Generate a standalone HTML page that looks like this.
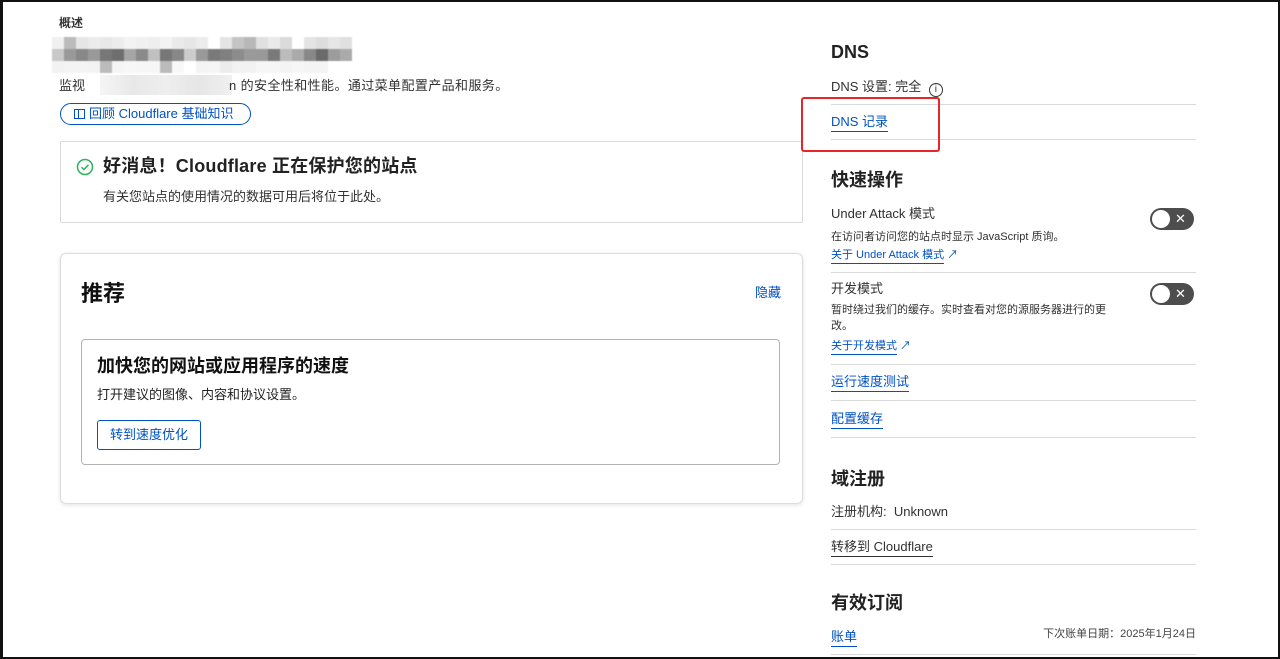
<!DOCTYPE html>
<html><head><meta charset="utf-8"><style>
*{margin:0;padding:0;box-sizing:border-box}
body{width:1280px;height:659px;overflow:hidden;background:#fff;font-family:"Liberation Sans","Noto Sans CJK SC",sans-serif;color:#313131;position:relative}
.a{position:absolute;white-space:nowrap;line-height:1}
.frame{position:absolute;left:0;top:0;width:1280px;height:659px;border-top:2px solid #111;border-left:3px solid #111;border-right:2px solid #111;border-bottom:2px solid #111;pointer-events:none;z-index:10}
.blue{color:#0051c3}
.ul{border-bottom:1px solid #0051c3;padding-bottom:2px}
.hr{position:absolute;left:831px;width:365px;height:1px;background:#d9d9d9}
.h{font-size:18px;font-weight:bold;color:#222}
.t13{font-size:13px}
.t11{font-size:11px}
.tog{position:absolute;left:1150px;width:44px;height:22px;border-radius:11px;background:#4d4d4d}
.tog:before{content:"";position:absolute;left:2px;top:2px;width:18px;height:18px;border-radius:50%;background:#fff}
.tog:after{content:"✕";position:absolute;left:25px;top:3px;color:#fff;font-size:13px;line-height:16px}
.mos{position:absolute;left:52px;top:37px;display:grid;grid-template-columns:repeat(25,12px);grid-auto-rows:12px;filter:blur(0.6px)}
</style></head><body>
<div class="a" style="left:59px;top:17px;font-size:12px;font-weight:bold;color:#333">概述</div>
<div class="mos">
<i style="background:#f0f0f0"></i><i style="background:#bbb"></i><i style="background:#e6e6e6"></i><i style="background:#ececec"></i><i style="background:#e8e8e8"></i><i style="background:#ececec"></i><i style="background:#f3f3f3"></i><i style="background:#f0f0f0"></i><i style="background:#eee"></i><i style="background:#f3f3f3"></i><i style="background:#eaeaea"></i><i style="background:#e6e6e6"></i><i style="background:#ececec"></i><i style="background:#fff"></i><i style="background:#e4e4e4"></i><i style="background:#c4c4c4"></i><i style="background:#b8b8b8"></i><i style="background:#e0e0e0"></i><i style="background:#eaeaea"></i><i style="background:#dadada"></i><i style="background:#fff"></i><i style="background:#e4e4e4"></i><i style="background:#ddd"></i><i style="background:#e6e6e6"></i><i style="background:#e0e0e0"></i>
<i style="background:#c8c8c8"></i><i style="background:#999"></i><i style="background:#888"></i><i style="background:#999"></i><i style="background:#777"></i><i style="background:#6e6e6e"></i><i style="background:#a5a5a5"></i><i style="background:#8a8a8a"></i><i style="background:#c0c0c0"></i><i style="background:#777"></i><i style="background:#888"></i><i style="background:#ccc"></i><i style="background:#999"></i><i style="background:#7a7a7a"></i><i style="background:#808080"></i><i style="background:#8c8c8c"></i><i style="background:#9a9a9a"></i><i style="background:#999"></i><i style="background:#7a7a7a"></i><i style="background:#bbb"></i><i style="background:#aaa"></i><i style="background:#888"></i><i style="background:#6a6a6a"></i><i style="background:#9c9c9c"></i><i style="background:#aaa"></i>
<i style="background:#f2f2f2"></i><i style="background:#f4f4f4"></i><i style="background:#f4f4f4"></i><i style="background:#f3f3f3"></i><i style="background:#bbb"></i><i style="background:#f5f5f5"></i><i style="background:#f7f7f7"></i><i style="background:#f6f6f6"></i><i style="background:#f6f6f6"></i><i style="background:#bbb"></i><i style="background:#f8f8f8"></i><i style="background:#fff"></i><i style="background:#f4f4f4"></i><i style="background:#f5f5f5"></i><i style="background:#ececec"></i><i style="background:#f2f2f2"></i><i style="background:#f2f2f2"></i><i style="background:#f6f6f6"></i><i style="background:#f6f6f6"></i><i style="background:#f4f4f4"></i><i style="background:#f6f6f6"></i><i style="background:#f4f4f4"></i><i style="background:#f4f4f4"></i><i style="background:#fff"></i><i style="background:#fff"></i>
</div>
<div class="a t13" style="left:59px;top:79px">监视</div>
<div class="a" style="left:100px;top:75px;width:132px;height:20px;background:linear-gradient(90deg,#f5f5f5,#e8e8e8,#eee,#e6e6e6,#f0f0f0)"></div>
<div class="a t13" style="left:229px;top:79px;letter-spacing:0.4px">n 的安全性和性能。通过菜单配置产品和服务。</div>
<div class="a t13 blue" style="left:60px;top:103px;width:191px;height:22px;border:1px solid #0051c3;border-radius:11px;padding:3px 0 0 13px;line-height:14px">
<span style="display:inline-block;width:11px;height:10px;border:1px solid #0051c3;margin-right:4px;vertical-align:-1px;position:relative"><span style="position:absolute;left:3px;top:0;width:1px;height:8px;background:#0051c3"></span></span>回顾 Cloudflare 基础知识</div>
<div class="a" style="left:60px;top:141px;width:743px;height:82px;border:1px solid #d9d9d9;border-radius:2px"></div>
<svg class="a" style="left:76px;top:158px" width="18" height="18" viewBox="0 0 18 18"><circle cx="9" cy="9" r="7.5" fill="none" stroke="#2db35d" stroke-width="1.5"/><path d="M5.5 9.2l2.4 2.4 4.6-4.8" fill="none" stroke="#2db35d" stroke-width="1.5"/></svg>
<div class="a" style="left:103px;top:157px;font-size:18px;font-weight:bold;color:#222;letter-spacing:0.2px">好消息！Cloudflare 正在保护您的站点</div>
<div class="a t13" style="left:103px;top:190px">有关您站点的使用情况的数据可用后将位于此处。</div>
<div class="a" style="left:60px;top:253px;width:743px;height:251px;border:1px solid #ddd;border-radius:6px;box-shadow:0 1px 4px rgba(0,0,0,.12)"></div>
<div class="a" style="left:81px;top:283px;font-size:22px;font-weight:bold;color:#111">推荐</div>
<div class="a t13 blue" style="left:755px;top:286px">隐藏</div>
<div class="a" style="left:81px;top:339px;width:699px;height:126px;border:1px solid #b3b3b3;border-radius:4px"></div>
<div class="a" style="left:97px;top:357px;font-size:18px;font-weight:bold;color:#111">加快您的网站或应用程序的速度</div>
<div class="a t13" style="left:97px;top:388px;color:#222">打开建议的图像、内容和协议设置。</div>
<div class="a t13 blue" style="left:97px;top:420px;width:104px;height:30px;border:1px solid #0051c3;border-radius:3px;text-align:center;line-height:28px">转到速度优化</div>

<div class="a h" style="left:831px;top:43px">DNS</div>
<div class="a t13" style="left:831px;top:80px">DNS 设置: 完全 <span style="display:inline-block;width:14px;height:14px;border:1px solid #333;border-radius:50%;font-size:10px;text-align:center;line-height:12px;vertical-align:-1px;margin-left:4px">i</span></div>
<div class="hr" style="top:104px"></div>
<div class="a t13 blue" style="left:831px;top:115px"><span class="ul">DNS 记录</span></div>
<div class="hr" style="top:139px"></div>
<div class="a" style="left:801px;top:97px;width:139px;height:55px;border:2px solid #e8262a;border-radius:3px"></div>
<div class="a h" style="left:831px;top:171px">快速操作</div>
<div class="a t13" style="left:831px;top:207px">Under Attack 模式</div>
<div class="tog" style="top:208px"></div>
<div class="a t11" style="left:831px;top:232px">在访问者访问您的站点时显示 JavaScript 质询。</div>
<div class="a t11 blue" style="left:831px;top:250px"><span class="ul">关于 Under Attack 模式</span> ↗</div>
<div class="hr" style="top:272px"></div>
<div class="a t13" style="left:831px;top:282px">开发模式</div>
<div class="tog" style="top:283px"></div>
<div class="a t11" style="left:831px;top:305px">暂时绕过我们的缓存。实时查看对您的源服务器进行的更</div>
<div class="a t11" style="left:831px;top:321px">改。</div>
<div class="a t11 blue" style="left:831px;top:341px"><span class="ul">关于开发模式</span> ↗</div>
<div class="hr" style="top:364px"></div>
<div class="a t13 blue" style="left:831px;top:375px"><span class="ul">运行速度测试</span></div>
<div class="hr" style="top:400px"></div>
<div class="a t13 blue" style="left:831px;top:412px"><span class="ul">配置缓存</span></div>
<div class="hr" style="top:437px"></div>
<div class="a h" style="left:831px;top:470px">域注册</div>
<div class="a t13" style="left:831px;top:505px">注册机构:&nbsp;&nbsp;Unknown</div>
<div class="hr" style="top:529px"></div>
<div class="a t13" style="left:831px;top:540px"><span style="border-bottom:1px solid #313131;padding-bottom:2px">转移到 Cloudflare</span></div>
<div class="hr" style="top:564px"></div>
<div class="a h" style="left:831px;top:594px">有效订阅</div>
<div class="a t13 blue" style="left:831px;top:630px"><span class="ul">账单</span></div>
<div class="a t11" style="right:84px;top:629px;color:#444">下次账单日期：2025年1月24日</div>
<div class="hr" style="top:654px"></div>
<div class="frame"></div>
</body></html>
